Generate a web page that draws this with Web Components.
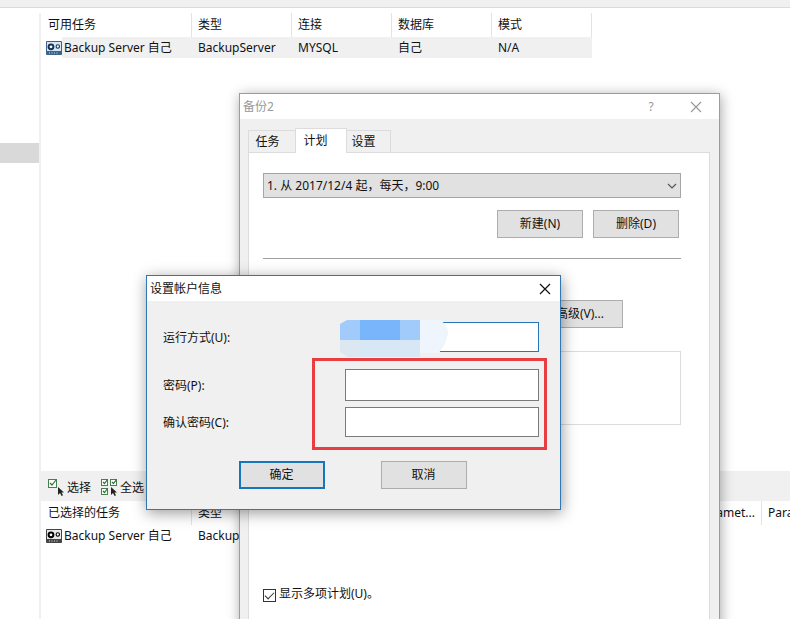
<!DOCTYPE html>
<html lang="zh-CN">
<head>
<meta charset="utf-8">
<title>备份2</title>
<style>
  html, body { height: 100%; margin: 0; overflow: hidden; background: #fff; }
  body { font: 12px/16px "Noto Sans", "Noto Sans CJK SC", sans-serif; color: #111; position: relative; }
  .plan { left: 239px; top: 93px; width: 479px; bottom: -20px; }
  .account { left: 146px; top: 275px; width: 413px; }
</style>
</head>
<body>
<backup-desktop></backup-desktop>
<desktop-window class="plan" caption="备份2" help><plan-panel></plan-panel></desktop-window>
<desktop-window class="account" caption="设置帐户信息" active><account-form></account-form></desktop-window>

<script>
const define = (name, html) => customElements.define(name, class extends HTMLElement {
  connectedCallback() {
    if (this.shadowRoot) return;
    const t = document.createElement('template');
    t.innerHTML = typeof html === 'function' ? html(this) : html;
    this.attachShadow({ mode: 'open' }).append(t.content.cloneNode(true));
  }
});

/* Tape-drive glyph, blue for available tasks and grey for chosen ones */
define('server-icon', `
<style>
  :host { display: block; width: 16px; height: 14px; color: #3d6187; --face: #d5e6f5; --eye: #14325a; }
  :host([mono]) { color: #444; --face: #e8e8e8; --eye: #000; }
  svg { display: block; }
</style>
<svg width="16" height="14" viewBox="0 0 16 14">
  <rect width="16" height="14" rx="1" fill="currentColor"/>
  <rect x="1" y="1" width="14" height="9" style="fill:var(--face)"/>
  <circle cx="5" cy="5.8" r="2.4" fill="#fff" style="stroke:var(--eye)" stroke-width="2"/>
  <circle cx="11.8" cy="5.5" r="1.7" fill="#fff" style="stroke:var(--eye)" stroke-width="1.1"/>
  <path d="M3 12h10" style="stroke:var(--face)" stroke-width="1" stroke-dasharray="1 1.5"/>
</svg>`);

define('pick-icon', el => {
  const box = (x, y, s) => `<rect x="${x + .5}" y="${y + .5}" width="${s}" height="${s}" fill="#fff" stroke="#47804c"/>
    <path d="M${x + 2} ${y + s / 2}l${s / 4} ${s / 4} ${s / 2} -${s / 2 + 1}" fill="none" stroke="#2c7435" stroke-width="1.2"/>`;
  return `<style>:host { display: block; } svg { display: block; }</style>
  <svg width="17" height="17" viewBox="0 0 17 17">
    ${el.hasAttribute('all') ? box(0, 0, 6) + box(9, 0, 6) + box(0, 9, 6) : box(0, 0, 8)}
    <path d="M10 8v8l2-2 1.6 3 1.4-.8-1.5-2.7H16z" fill="#222"/>
  </svg>`;
});

define('task-list', el => {
  const heads = el.getAttribute('heads').split('|');
  const cells = el.getAttribute('cells').split('|');
  const widths = el.getAttribute('widths').split(' ');
  const mono = el.hasAttribute('mono') ? 'mono' : '';
  return `<style>
    :host { display: block; overflow: hidden; --row: #f0f0f0; }
    :host([mono]) { --row: transparent; }
    table { border-collapse: separate; border-spacing: 0; table-layout: fixed; width: 0; }
    th { height: 24px; padding: 0 0 0 6px; text-align: left; font-weight: 400; border-right: 1px solid #e3e3e3; white-space: nowrap; box-sizing: border-box; }
    th.first { padding-left: 7px; }
    th.end { text-align: right; padding-right: 6px; }
    td { height: 21px; padding: 0 0 0 6px; background: var(--row); white-space: nowrap; }
    td.first { padding: 0 0 0 5px; background: none; }
    .name { display: flex; align-items: center; height: 21px; }
    .name span { flex: 1; height: 21px; line-height: 21px; padding-left: 2px; background: var(--row); }
  </style>
  <table>
    <colgroup>${widths.map(w => `<col style="width:${w}px">`).join('')}</colgroup>
    <thead><tr>${heads.map((h, i) => `<th scope="col" class="${i ? (h.endsWith('...') ? 'end' : '') : 'first'}">${h}</th>`).join('')}</tr></thead>
    <tbody><tr>${cells.map((c, i) => i ? `<td>${c}</td>` :
      `<td class="first"><div class="name"><server-icon ${mono}></server-icon><span>${c}</span></div></td>`).join('')}</tr></tbody>
  </table>`;
});

define('tool-button', `
<style>
  :host { display: block; }
  button { display: flex; align-items: center; gap: 2px; padding: 0; border: 0; background: none; font: inherit; line-height: 18px; color: inherit; }
</style>
<button type="button"><slot name="icon"></slot><slot></slot></button>`);

define('backup-desktop', `
<style>
  :host { display: flex; flex-direction: column; height: 100%; }
  header { height: 7px; background: #f0f0f0; border-bottom: 1px solid #dadada; }
  .body { flex: 1; display: grid; grid-template-columns: 39px 1fr; min-height: 0; }
  nav { margin-top: 5px; border-right: 2px solid #f0f0f0; width: 39px; }
  nav div { margin-top: 130px; height: 20px; background: #d9d9d9; }
  main { display: flex; flex-direction: column; min-width: 0; padding: 5px 0 0 2px; }
  .available { flex: 1; }
  .bar { display: flex; align-items: center; gap: 10px; height: 30px; padding: 3px 7px 0; box-sizing: border-box; background: #f0f0f0; }
  .chosen { height: 118px; }
</style>
<header></header>
<div class="body">
  <nav><div></div></nav>
  <main>
    <task-list class="available" widths="151 100 100 100 100" heads="可用任务|类型|连接|数据库|模式"
      cells="Backup Server 自己|BackupServer|MYSQL|自己|N/A"></task-list>
    <div class="bar">
      <tool-button><pick-icon slot="icon"></pick-icon>选择</tool-button>
      <tool-button><pick-icon slot="icon" all></pick-icon>全选</tool-button>
    </div>
    <task-list mono class="chosen" widths="151 100 100 100 100 170 100" heads="已选择的任务|类型||||Paramet...|Para"
      cells="Backup Server 自己|Backup|||||"></task-list>
  </main>
</div>`);

define('desktop-window', el => `
<style>
  :host { position: absolute; display: flex; flex-direction: column; border: 1px solid #9c9c9c; background: #f0f0f0; box-shadow: 1px 2px 12px rgba(0,0,0,.35); }
  :host([active]) { border-color: #2f78b4; box-shadow: 1px 3px 14px rgba(0,0,0,.4); }
  header { display: flex; align-items: center; height: 25px; padding: 0 9px 0 3px; background: #fff; color: #999; }
  :host([active]) header { color: #111; }
  h1 { flex: 1; margin: 0; font: inherit; }
  button { display: grid; place-items: center; width: 12px; height: 22px; padding: 0; border: 0; background: none; color: inherit; font: inherit; }
  .help { margin-right: 33px; }
  .close { margin-right: 8px; }
  :host([active]) .close { margin-right: 0; }
  main { flex: 1; display: flex; flex-direction: column; }
  ::slotted(*) { flex: 1; }
</style>
<header>
  <h1>${el.getAttribute('caption')}</h1>
  ${el.hasAttribute('help') ? '<button class="help" type="button">?</button>' : ''}
  <button class="close" type="button" aria-label="关闭"><svg width="12" height="12" viewBox="0 0 12 12"><path d="M1 1l10 10M11 1L1 11" fill="none" stroke="currentColor" stroke-width="1.2"/></svg></button>
</header>
<main><slot></slot></main>`);

define('push-button', `
<style>
  :host { display: block; }
  button { display: block; width: 86px; height: 28px; padding: 0; border: 1px solid #adadad; background: #e1e1e1; font: inherit; color: inherit; }
  :host([primary]) button { border: 2px solid #1874bb; }
</style>
<button type="button"><slot></slot></button>`);

define('plan-tabs', `
<style>
  :host { display: flex; align-items: flex-end; height: 24px; }
  button { height: 22px; padding: 0; border: 1px solid #dcdcdc; border-bottom: 0; background: #f0f0f0; font: inherit; color: inherit; }
  .task { width: 47px; padding-right: 9px; border-right: 0; }
  .plan { width: 52px; height: 25px; margin-bottom: -1px; padding: 0 11px 1px 0; background: #fff; }
  .options { width: 44px; padding-right: 10px; border-left: 0; }
</style>
<button class="task" type="button" role="tab">任务</button><button class="plan" type="button" role="tab" aria-selected="true">计划</button><button class="options" type="button" role="tab">设置</button>`);

define('plan-panel', `
<style>
  :host { display: flex; flex-direction: column; padding: 9px 9px 0 8px; }
  plan-tabs { position: relative; z-index: 1; }
  .page { flex: 1; border: 1px solid #dcdcdc; background: #fff; padding: 20px 28px 0 14px; }
  .combo { display: grid; align-items: center; }
  .combo > * { grid-area: 1 / 1; }
  select { appearance: none; width: 100%; height: 25px; padding: 0 3px; border: 1px solid #a5a5a5; border-radius: 0; background: #e1e1e1; font: inherit; color: inherit; }
  .combo svg { justify-self: end; margin-right: 4px; pointer-events: none; }
  .actions { display: flex; justify-content: flex-end; gap: 10px; margin-top: 12px; padding-right: 2px; }
  hr { margin: 20px 0 41px; border: 0; border-top: 1px solid #a0a0a0; }
  .advanced { display: flex; justify-content: flex-end; padding-right: 58px; }
  .box { height: 72px; margin-top: 23px; border: 1px solid #dcdcdc; }
  .check { display: flex; align-items: center; gap: 3px; margin-top: 161px; }
  input { appearance: none; width: 13px; height: 13px; margin: 2px 0 0; border: 1px solid #333; background: #fff; }
  input:checked::before { content: ""; display: block; width: 9px; height: 5px; margin: 2px 0 0 1px; border: solid #333; border-width: 0 0 1px 1px; transform: rotate(-45deg); box-sizing: border-box; }
</style>
<plan-tabs role="tablist"></plan-tabs>
<div class="page">
  <div class="combo">
    <select aria-label="计划"><option>1. 从 2017/12/4 起，每天，9:00</option></select>
    <svg width="10" height="6" viewBox="0 0 10 6"><path d="M1 1l4 4 4-4" fill="none" stroke="#555" stroke-width="1.2"/></svg>
  </div>
  <div class="actions"><push-button>新建(N)</push-button><push-button>删除(D)</push-button></div>
  <hr>
  <div class="advanced"><push-button>高级(V)...</push-button></div>
  <div class="box"></div>
  <div class="check"><input id="multi" type="checkbox" checked><label for="multi">显示多项计划(U)。</label></div>
</div>`);

define('account-field', el => `
<style>
  :host { display: grid; grid-template-columns: 182px 1fr; align-items: center; }
  label { padding-top: 2px; }
  input { box-sizing: border-box; width: 100%; height: 30px; border: 1px solid #7a7a7a; border-radius: 0; background: #fff; padding: 0 6px; font: inherit; outline: 0; }
  :host([tall]) input { height: 32px; }
  :host([focused]) input { border-color: #2775b6; }
</style>
<label for="field"><slot></slot></label>
<input id="field" type="${el.getAttribute('type') || 'text'}">`);

define('account-form', `
<style>
  :host { display: block; position: relative; padding: 21px 21px 20px 16px; }
  .pass { display: grid; gap: 6px; margin-top: 17px; }
  .mark { position: absolute; left: 165px; right: 13px; top: 57px; height: 86px; border: 3px solid #e83e42; pointer-events: none; }
  .smudge { position: absolute; left: 193px; top: 19px; }
  .buttons { display: flex; justify-content: center; gap: 56px; margin-top: 24px; padding-left: 3px; }
</style>
<account-field focused>运行方式(U):</account-field>
<div class="pass">
  <account-field tall type="password">密码(P):</account-field>
  <account-field type="password">确认密码(C):</account-field>
</div>
<div class="buttons"><push-button primary>确定</push-button><push-button>取消</push-button></div>
<svg class="smudge" width="108" height="37" viewBox="0 0 108 37" aria-hidden="true">
  <path d="M80 0h20q8 5 8 14l-3 10-6 9H80z" fill="#eff5fc"/>
  <path d="M0 20h80v17H8l-8-5z" fill="#d8e7f6"/>
  <path d="M0 20h20v15H6l-6-3z" fill="#dde7f2"/>
  <path d="M0 4l7-4h73v20H0z" fill="#a0cbfa"/>
  <path d="M20 0h60v20H20z" fill="#78b5fa"/>
  <path d="M60 0h20v20H60z" fill="#a0cbfa"/>
</svg>
<div class="mark"></div>`);
</script>
</body>
</html>
